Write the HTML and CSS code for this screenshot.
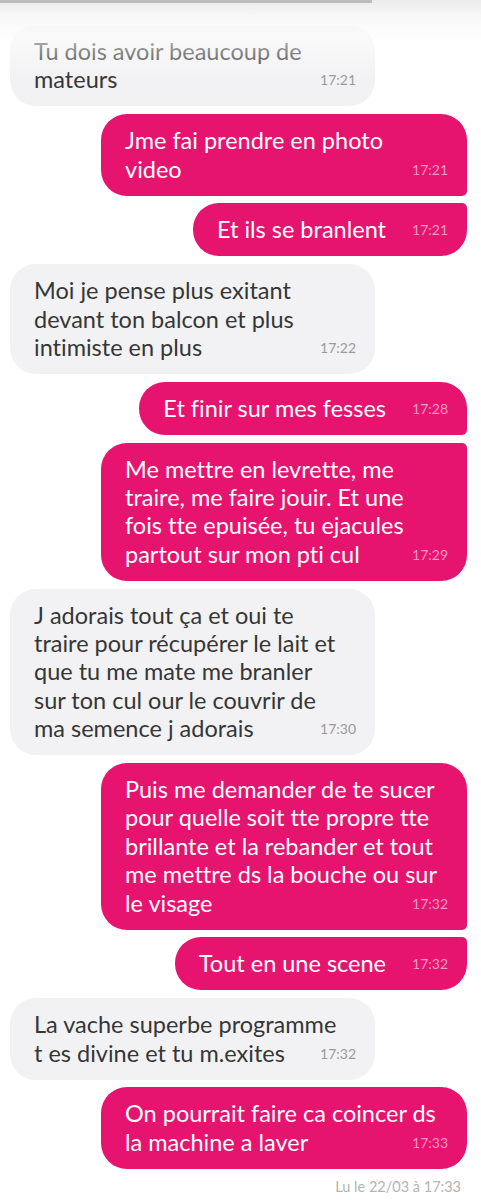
FILE: index.html
```html
<!DOCTYPE html>
<html lang="fr">
<head>
    <meta charset="UTF-8">
    <meta name="viewport" content="width=device-width, initial-scale=1.0">
    <title>Messages</title>
    <link rel="stylesheet" href="styles.css">
</head>
<body>
    <div class="top-bar"></div>
    <div class="top-fade"></div>

    <div class="chat">
        <div class="msg in wide">Tu dois avoir beaucoup de<br>mateurs<span class="time">17:21</span></div>
        <div class="msg out wide group-first">Jme fai prendre en photo<br>video<span class="time">17:21</span></div>
        <div class="msg out group-last">Et ils se branlent<span class="time">17:21</span></div>
        <div class="msg in wide">Moi je pense plus exitant<br>devant ton balcon et plus<br>intimiste en plus<span class="time">17:22</span></div>
        <div class="msg out group-first">Et finir sur mes fesses<span class="time">17:28</span></div>
        <div class="msg out wide group-last">Me mettre en levrette, me<br>traire, me faire jouir. Et une<br>fois tte epuisée, tu ejacules<br>partout sur mon pti cul<span class="time">17:29</span></div>
        <div class="msg in wide">J adorais tout ça et oui te<br>traire pour récupérer le lait et<br>que tu me mate me branler<br>sur ton cul our le couvrir de<br>ma semence j adorais<span class="time">17:30</span></div>
        <div class="msg out wide group-first">Puis me demander de te sucer<br>pour quelle soit tte propre tte<br>brillante et la rebander et tout<br>me mettre ds la bouche ou sur<br>le visage<span class="time">17:32</span></div>
        <div class="msg out group-last">Tout en une scene<span class="time">17:32</span></div>
        <div class="msg in wide">La vache superbe programme<br>t es divine et tu m.exites<span class="time">17:32</span></div>
        <div class="msg out wide">On pourrait faire ca coincer ds<br>la machine a laver<span class="time">17:33</span></div>
        <div class="read">Lu le 22/03 à 17:33</div>
    </div>
</body>
</html>
```

FILE: styles.css
```css
:root {
    --pink: #e6136f;
    --grey-bubble: #f2f2f4;
    --text-dark: #363636;
    --radius: 26px;
}

* {
    margin: 0;
    padding: 0;
    box-sizing: border-box;
}

body {
    font-family: Lato, 'Noto Sans', sans-serif;
    font-variant-ligatures: none;
    background-color: #ffffff;
    width: 481px;
    height: 1200px;
    overflow: hidden;
    position: relative;
}

.top-bar {
    height: 3px;
    background: linear-gradient(to right, #bdbdbd 372px, #ececec 372px);
}

/* scroll fade over the first message */
.top-fade {
    position: absolute;
    top: 3px;
    left: 0;
    right: 0;
    height: 75px;
    background: linear-gradient(to bottom,
        rgba(238, 238, 238, 1) 0,
        rgba(248, 248, 248, 0.85) 16px,
        rgba(255, 255, 255, 0.55) 40px,
        rgba(255, 255, 255, 0) 75px);
    pointer-events: none;
}

.chat {
    display: flex;
    flex-direction: column;
    gap: 7.8px;
    padding: 22px 14px 0 10px;
}

.msg {
    max-width: 366px;
    padding: 12px 19px 12px 24px;
    border-radius: var(--radius);
    font-size: 23.5px;
    line-height: 28.4px;
    font-weight: 400;
    white-space: nowrap;
}

.wide {
    width: 366px;
}

.in {
    align-self: flex-start;
    width: 365px;
    background-color: var(--grey-bubble);
    color: var(--text-dark);
}

.out {
    align-self: flex-end;
    background-color: var(--pink);
    color: #ffffff;
}

.group-first {
    border-bottom-right-radius: 5px;
}

.group-last {
    border-top-right-radius: 5px;
}

.time {
    float: right;
    margin-left: 26px;
    font-size: 14px;
    line-height: 29px;
}

.in .time {
    color: #9a9a9a;
}

.out .time {
    color: #f59ac4;
}

.read {
    align-self: flex-end;
    margin-top: 0;
    padding-right: 6px;
    font-size: 14.5px;
    line-height: 20px;
    color: #b3b3b3;
}
```
